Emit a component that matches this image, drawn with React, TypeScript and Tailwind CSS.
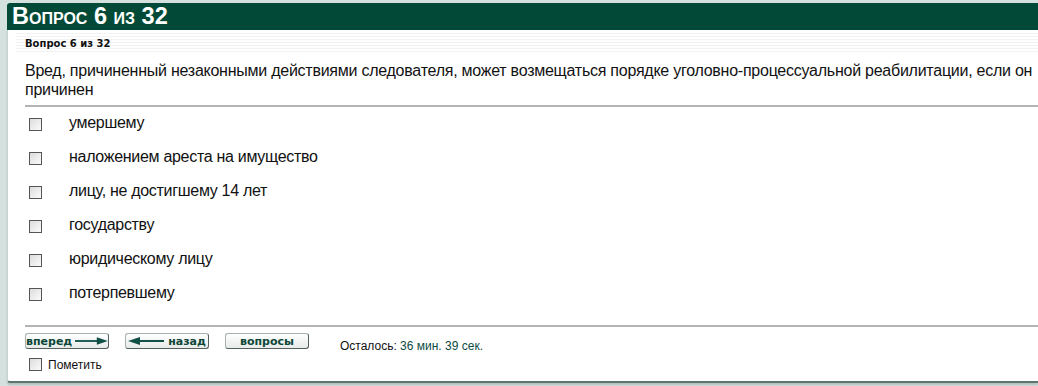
import React from "react";

const options = [
  "умершему",
  "наложением ареста на имущество",
  "лицу, не достигшему 14 лет",
  "государству",
  "юридическому лицу",
  "потерпевшему",
];

function Box() {
  return (
    <span className="inline-block w-[13px] h-[13px] border border-[#555] bg-[linear-gradient(135deg,#dcdcdc,#fbfbfb)] shrink-0" />
  );
}

function ArrowRight() {
  return (
    <svg width="36" height="8" viewBox="0 0 36 8" className="ml-[3px]">
      <line x1="0" y1="4" x2="28" y2="4" stroke="#0f4f46" strokeWidth="2" />
      <polygon points="24,0 36,4 24,8" fill="#0f4f46" />
    </svg>
  );
}

function ArrowLeft() {
  return (
    <svg width="36" height="8" viewBox="0 0 36 8" className="mr-[4px]">
      <line x1="8" y1="4" x2="36" y2="4" stroke="#0f4f46" strokeWidth="2" />
      <polygon points="12,0 0,4 12,8" fill="#0f4f46" />
    </svg>
  );
}

function Btn({ children }: { children: React.ReactNode }) {
  return (
    <div className="w-[84px] h-[16px] flex items-center justify-center rounded-[3px] border border-[#a7b1ae] border-r-[#55605d] border-b-[#55605d] bg-[linear-gradient(#ffffff,#e6eae9)] text-[11px] leading-none font-bold text-[#0b4637] [font-family:'DejaVu_Sans',Verdana,sans-serif]">
      {children}
    </div>
  );
}

export default function App() {
  return (
    <div className="w-[1038px] h-[386px] bg-[#d5e1de] pl-[7px] pt-[3px] overflow-hidden [font-family:'Liberation_Sans',Arial,sans-serif]">
      <div className="h-[27px] bg-[#024a37] rounded-tl-[3px] flex items-center pl-[5px]">
        <span className="text-white font-bold text-[23.5px] leading-none [font-variant:small-caps]">
          Вопрос 6 из 32
        </span>
      </div>
      <div className="h-[353px] bg-white border-l border-[#c9d2cf] border-b-2 border-b-[#5d7670] shadow-[0_2px_2px_rgba(0,0,0,0.15)] rounded-bl-[3px] pt-[3px]">
        <div className="ml-[8px] h-[21px] flex items-center pl-[9px] bg-[repeating-linear-gradient(#f2f2f2_0px,#f2f2f2_1px,#ffffff_1px,#ffffff_3px)]">
          <span className="text-[10px] font-bold text-[#111] [font-family:'DejaVu_Sans',Verdana,sans-serif]">
            Вопрос 6 из 32
          </span>
        </div>
        <div className="pl-[17px] pt-[7px] text-[16px] leading-[19px] tracking-[-0.25px] text-[#111] whitespace-nowrap">
          Вред, причиненный незаконными действиями следователя, может возмещаться порядке уголовно-процессуальной реабилитации, если он
          <br />
          причинен
        </div>
        <div className="ml-[17px] mt-[6px] h-[2px] bg-[#b4b4b4]" />
        <div className="pl-[21px] pt-[3px] flex flex-col">
          {options.map((o) => (
            <div key={o} className="h-[34px] flex items-start pt-[3px]">
              <div className="pt-[1px]">
                <Box />
              </div>
              <span className="ml-[27px] text-[16px] leading-[19px] tracking-[-0.3px] text-[#111]">{o}</span>
            </div>
          ))}
        </div>
        <div className="ml-[17px] mt-[11px] h-[2px] bg-[#b4b4b4]" />
        <div className="pl-[17px] pt-[6px] flex items-start">
          <Btn>
            вперед
            <ArrowRight />
          </Btn>
          <div className="ml-[16px]">
            <Btn>
              <ArrowLeft />
              назад
            </Btn>
          </div>
          <div className="ml-[16px]">
            <Btn>вопросы</Btn>
          </div>
          <div className="ml-[31px] mt-[7px] text-[12px] leading-none text-[#111]">
            Осталось: <span className="text-[#0d4a44]">36 мин. 39 сек.</span>
          </div>
        </div>
        <div className="pl-[21px] pt-[6px] flex items-center">
          <Box />
          <span className="ml-[6px] text-[12px] leading-none text-[#111]">Пометить</span>
        </div>
      </div>
    </div>
  );
}
